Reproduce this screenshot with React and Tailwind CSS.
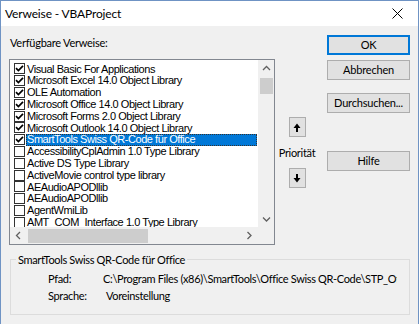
const refs = [
  { name: "Visual Basic For Applications", checked: true },
  { name: "Microsoft Excel 14.0 Object Library", checked: true },
  { name: "OLE Automation", checked: true },
  { name: "Microsoft Office 14.0 Object Library", checked: true },
  { name: "Microsoft Forms 2.0 Object Library", checked: true },
  { name: "Microsoft Outlook 14.0 Object Library", checked: true },
  { name: "SmartTools Swiss QR-Code für Office", checked: true, selected: true },
  { name: "AccessibilityCplAdmin 1.0 Type Library", checked: false },
  { name: "Active DS Type Library", checked: false },
  { name: "ActiveMovie control type library", checked: false },
  { name: "AEAudioAPODllib", checked: false },
  { name: "AEAudioAPODllib", checked: false },
  { name: "AgentWmiLib", checked: false },
  { name: "AMT_COM_Interface 1.0 Type Library", checked: false },
];

const uiFont = { fontFamily: 'Lato, "Liberation Sans", sans-serif' };
const listFont = { fontFamily: '"Liberation Sans", Arial, sans-serif' };

function CheckBox({ checked }) {
  return (
    <div className="w-[11px] h-[11px] shrink-0 border border-[#333333] bg-white flex items-center justify-center">
      {checked && (
        <svg width="9" height="9" viewBox="0 0 9 9">
          <path d="M1 4.2 L3.4 6.6 L8 1.8" fill="none" stroke="#000" strokeWidth="1.7" />
        </svg>
      )}
    </div>
  );
}

function Chevron({ dir }) {
  const paths = {
    up: "M1 5 L4.5 1.5 L8 5",
    down: "M1 1.5 L4.5 5 L8 1.5",
    left: "M5 1 L1.5 4.5 L5 8",
    right: "M1.5 1 L5 4.5 L1.5 8",
  };
  const vertical = dir === "up" || dir === "down";
  return (
    <svg width={vertical ? 9 : 7} height={vertical ? 7 : 9} viewBox={vertical ? "0 0 9 7" : "0 0 7 9"}>
      <path d={paths[dir]} fill="none" stroke="#606060" strokeWidth="1.3" />
    </svg>
  );
}

function Button({ children, focused, className = "" }) {
  return (
    <button
      type="button"
      className={`h-[20px] w-[83px] flex items-center justify-center bg-[#e1e1e1] text-[11px] tracking-[-0.2px] text-black ${
        focused ? "border-2 border-[#0078d7]" : "border border-[#adadad]"
      } ${className}`}
      style={uiFont}
    >
      {children}
    </button>
  );
}

function ArrowButton({ down }) {
  return (
    <button
      type="button"
      className="w-[17px] h-[20px] bg-[#e1e1e1] border border-[#adadad] flex items-center justify-center"
    >
      <svg width="8" height="9" viewBox="0 0 8 9">
        {down ? (
          <path d="M3 0 H5 V4 H7.5 L4 8.5 L0.5 4 H3 Z" fill="#000" />
        ) : (
          <path d="M4 0.5 L7.5 5 H5 V9 H3 V5 H0.5 Z" fill="#000" />
        )}
      </svg>
    </button>
  );
}

export default function App() {
  return (
    <div
      className="w-[419px] h-[324px] overflow-hidden bg-[#f0f0f0] border-x border-t border-[#6f93c4] flex flex-col text-black"
      style={uiFont}
    >
      {/* Title bar */}
      <div className="h-[25px] shrink-0 bg-white flex items-center pl-[4px] pr-[15px]">
        <span className="text-[12px] tracking-[-0.15px] flex-1">Verweise - VBAProject</span>
        <svg width="11" height="11" viewBox="0 0 11 11">
          <path d="M0.5 0.5 L10.5 10.5 M10.5 0.5 L0.5 10.5" stroke="#000" strokeWidth="1" />
        </svg>
      </div>

      <div className="flex">
        {/* Left: list */}
        <div className="ml-[8px] w-[266px] flex flex-col">
          <div className="mt-[9px] h-[15px] leading-[15px] text-[11px] pl-[1px] tracking-[-0.25px]">
            Verfügbare Verweise:
          </div>
          <div className="mt-[9px] h-[186px] border border-[#828790] bg-white flex flex-col">
            <div className="flex h-[167px]">
              <div
                className="flex-1 overflow-hidden pt-[3px] pl-[4px] pr-[1px] text-[11px] tracking-[-0.45px]"
                style={listFont}
              >
                {refs.map((r, i) => (
                  <div key={i} className="h-[11.8px] flex items-center">
                    <CheckBox checked={r.checked} />
                    <div
                      className={`ml-[1px] h-full flex-1 flex items-center pl-[1px] whitespace-nowrap ${
                        r.selected ? "bg-[#0078d7] text-white outline-1 outline-dotted outline-[#333333] -outline-offset-1" : ""
                      }`}
                    >
                      {r.name}
                    </div>
                  </div>
                ))}
              </div>
              <div className="w-[16px] bg-[#f0f0f0] flex flex-col items-center">
                <div className="h-[16px] flex items-center justify-center">
                  <Chevron dir="up" />
                </div>
                <div className="mt-[2px] w-[13px] h-[16px] bg-[#cdcdcd]" />
                <div className="flex-1" />
                <div className="h-[16px] flex items-center justify-center">
                  <Chevron dir="down" />
                </div>
              </div>
            </div>
            <div className="flex h-[17px] bg-[#f0f0f0]">
              <div className="flex-1 flex items-center">
                <div className="w-[17px] flex justify-center">
                  <Chevron dir="left" />
                </div>
                <div className="ml-[1px] w-[120px] h-[14px] bg-[#cdcdcd]" />
                <div className="flex-1" />
                <div className="w-[17px] flex justify-center">
                  <Chevron dir="right" />
                </div>
              </div>
              <div className="w-[16px] bg-[#f0f0f0]" />
            </div>
          </div>
        </div>

        {/* Middle: priority */}
        <div className="ml-[2px] w-[40px] flex flex-col items-center">
          <div className="mt-[91px]">
            <ArrowButton />
          </div>
          <div className="mt-[9px] h-[14px] leading-[14px] text-[11px] tracking-[-0.3px]">Priorität</div>
          <div className="mt-[8px]">
            <ArrowButton down />
          </div>
        </div>

        {/* Right: buttons */}
        <div className="ml-[10px] flex flex-col">
          <Button focused className="mt-[9px]">OK</Button>
          <Button className="mt-[5px]">Abbrechen</Button>
          <Button className="mt-[13px]">Durchsuchen...</Button>
          <Button className="mt-[38px]">Hilfe</Button>
        </div>
      </div>

      {/* Info group */}
      <fieldset className="ml-[9px] mt-[7px] w-[400px] h-[63px] border border-[#dcdcdc] text-[11px] tracking-[-0.35px]">
        <legend className="ml-[5px] px-[2px] leading-[15px]">SmartTools Swiss QR-Code für Office</legend>
        <div className="pl-[37px] pt-[5px] flex flex-col gap-[2px]">
          <div className="flex h-[15px] items-center">
            <span className="w-[55px]">Pfad:</span>
            <span className="w-[294px] overflow-hidden whitespace-nowrap">
              C:\Program Files (x86)\SmartTools\Office Swiss QR-Code\STP_OfficeQRCode.xlam
            </span>
          </div>
          <div className="flex h-[15px] items-center">
            <span className="w-[58px]">Sprache:</span>
            <span>Voreinstellung</span>
          </div>
        </div>
      </fieldset>
    </div>
  );
}
